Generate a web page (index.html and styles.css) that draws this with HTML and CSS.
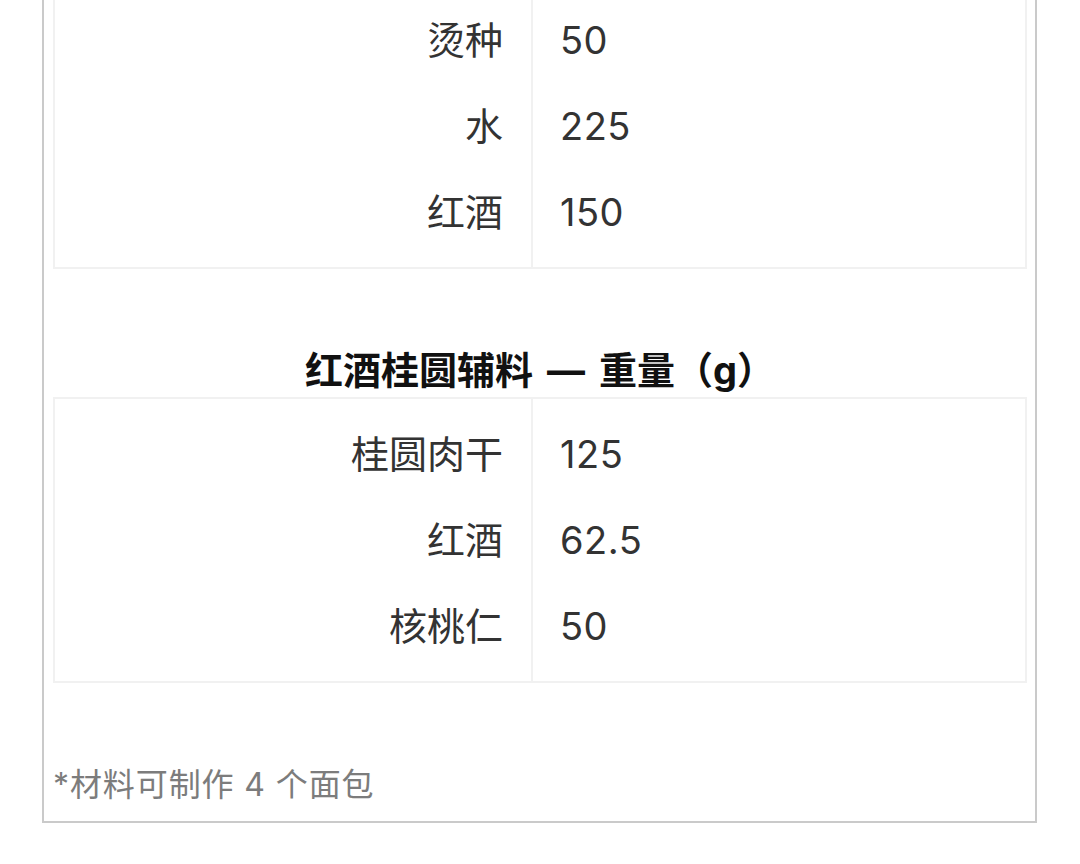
FILE: index.html
```html
<!DOCTYPE html>
<html lang="zh-CN">
<head>
<meta charset="utf-8">
<title>红酒桂圆面包配方</title>
<link rel="stylesheet" href="styles.css">
</head>
<body>
<div class="sheet">
  <div class="ing ing-first">
    <div class="row"><div class="k">烫种</div><div class="v">50</div></div>
    <div class="row"><div class="k">水</div><div class="v">225</div></div>
    <div class="row"><div class="k">红酒</div><div class="v">150</div></div>
  </div>

  <h3 class="caption">红酒桂圆辅料 — 重量（g）</h3>
  <div class="ing">
    <div class="row"><div class="k">桂圆肉干</div><div class="v">125</div></div>
    <div class="row"><div class="k">红酒</div><div class="v">62.5</div></div>
    <div class="row"><div class="k">核桃仁</div><div class="v">50</div></div>
  </div>

  <p class="note">*材料可制作 4 个面包</p>
</div>
</body>
</html>
```

FILE: styles.css
```css
html, body {
  margin: 0;
  padding: 0;
  background: #ffffff;
}

body {
  font-family: Inter, "Noto Sans CJK SC", sans-serif;
  color: #333333;
}

.sheet {
  margin-left: 42px;
  width: 974px;
  border: 2px solid #cacaca;
  border-top: none;
  padding: 0 8px 12px 9px;
  box-sizing: content-box;
}

.ing {
  border: 2px solid #f1f1f1;
}

.ing-first {
  margin-top: -17px;
}

.row {
  display: grid;
  grid-template-columns: 478px 1fr;
}

.k,
.v {
  height: 86px;
  display: flex;
  align-items: center;
  font-size: 38px;
  line-height: 1;
  color: #333333;
}

.k {
  justify-content: flex-end;
  padding-right: 28px;
  border-right: 2px solid #f1f1f1;
}

.v {
  padding-left: 27px;
  letter-spacing: 0.5px;
}

.row:first-child > .k,
.row:first-child > .v {
  padding-top: 12px;
}

.row:last-child > .k,
.row:last-child > .v {
  padding-bottom: 12px;
}

.caption {
  margin: 74px 0 0 0;
  height: 54px;
  line-height: 54px;
  font-size: 38px;
  font-weight: 700;
  text-align: center;
  word-spacing: 5px;
  color: #111111;
}

.note {
  margin: 78px 0 0 0;
  height: 48px;
  line-height: 48px;
  font-size: 32px;
  letter-spacing: 0.9px;
  color: #7c7c7c;
}
```
